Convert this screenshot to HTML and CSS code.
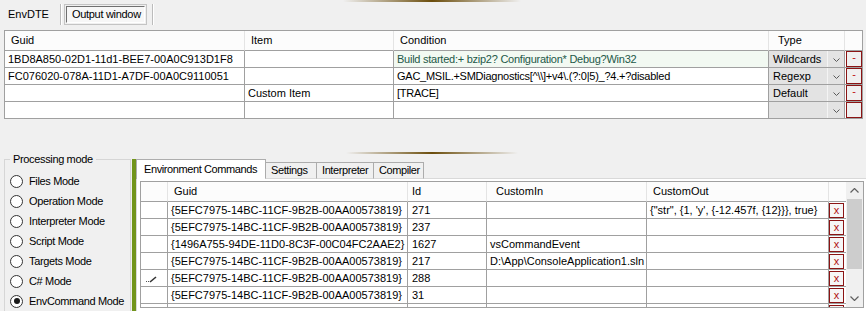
FILE: index.html
```html
<!DOCTYPE html>
<html lang="en">
<head>
    <meta charset="UTF-8">
    <title>EnvDTE Output window</title>
    <link rel="stylesheet" href="styles.css">
</head>
<body>
    <div class="ornament ornament-top"></div>
    <div class="toolbar">
        <span class="tb-label">EnvDTE</span>
        <span class="tb-sep"></span>
        <span class="tb-button"><span>Output window</span></span>
        <span class="tb-sep"></span>
    </div>

    <div class="grid filters">
        <div class="f-row head">
            <div class="cell">Guid</div>
            <div class="cell">Item</div>
            <div class="cell">Condition</div>
            <div class="cell">Type</div>
            <div class="cell"></div>
        </div>
        <div class="f-row">
            <div class="cell">1BD8A850-02D1-11d1-BEE7-00A0C913D1F8</div>
            <div class="cell"></div>
            <div class="cell cond active">Build started:+ bzip2? Configuration* Debug?Win32</div>
            <div class="cell combo"><span class="combo-text">Wildcards</span><span class="combo-arrow"><svg width="7" height="4"><polyline points="0.5,0.5 3.5,3.5 6.5,0.5" fill="none" stroke="#5a5a5a"/></svg></span></div>
            <div class="cell"><span class="minus">-</span></div>
        </div>
        <div class="f-row">
            <div class="cell">FC076020-078A-11D1-A7DF-00A0C9110051</div>
            <div class="cell"></div>
            <div class="cell cond">GAC_MSIL.+SMDiagnostics[^\\]+v4\.(?:0|5)_?4.+?disabled</div>
            <div class="cell combo"><span class="combo-text">Regexp</span><span class="combo-arrow"><svg width="7" height="4"><polyline points="0.5,0.5 3.5,3.5 6.5,0.5" fill="none" stroke="#5a5a5a"/></svg></span></div>
            <div class="cell"><span class="minus">-</span></div>
        </div>
        <div class="f-row">
            <div class="cell"></div>
            <div class="cell">Custom Item</div>
            <div class="cell cond">[TRACE]</div>
            <div class="cell combo"><span class="combo-text">Default</span><span class="combo-arrow"><svg width="7" height="4"><polyline points="0.5,0.5 3.5,3.5 6.5,0.5" fill="none" stroke="#5a5a5a"/></svg></span></div>
            <div class="cell"><span class="minus">-</span></div>
        </div>
        <div class="f-row last">
            <div class="cell"></div>
            <div class="cell"></div>
            <div class="cell"></div>
            <div class="cell combo"><span class="combo-text"></span><span class="combo-arrow"><svg width="7" height="4"><polyline points="0.5,0.5 3.5,3.5 6.5,0.5" fill="none" stroke="#5a5a5a"/></svg></span></div>
            <div class="cell"><span class="minus"></span></div>
        </div>
    </div>

    <div class="ornament ornament-mid"></div>

    <div class="bottom">
        <div class="group">
            <div class="group-title">Processing mode</div>
            <div class="modes">
                <div class="mode"><span class="radio"></span>Files Mode</div>
                <div class="mode"><span class="radio"></span>Operation Mode</div>
                <div class="mode"><span class="radio"></span>Interpreter Mode</div>
                <div class="mode"><span class="radio"></span>Script Mode</div>
                <div class="mode"><span class="radio"></span>Targets Mode</div>
                <div class="mode"><span class="radio"></span>C# Mode</div>
                <div class="mode"><span class="radio on"><span class="dot"></span></span>EnvCommand Mode</div>
            </div>
        </div>
        <div class="accent"></div>
        <div class="tabs">
            <div class="tab-strip">
                <div class="tab selected w-env">Environment Commands</div>
                <div class="tab w-set">Settings</div>
                <div class="tab w-int">Interpreter</div>
                <div class="tab w-cmp">Compiler</div>
                <div class="tab-fill"></div>
            </div>
            <div class="page">
                <div class="grid commands">
                    <div class="cmd-rows">
                        <div class="c-row head">
                            <div class="cell"></div>
                            <div class="cell">Guid</div>
                            <div class="cell">Id</div>
                            <div class="cell">CustomIn</div>
                            <div class="cell">CustomOut</div>
                            <div class="cell"></div>
                        </div>
                        <div class="c-row">
                            <div class="cell"></div>
                            <div class="cell">{5EFC7975-14BC-11CF-9B2B-00AA00573819}</div>
                            <div class="cell">271</div>
                            <div class="cell"></div>
                            <div class="cell">{"str", {1, 'y', {-12.457f, {12}}}, true}</div>
                            <div class="cell"><span class="xbtn">x</span></div>
                        </div>
                        <div class="c-row">
                            <div class="cell"></div>
                            <div class="cell">{5EFC7975-14BC-11CF-9B2B-00AA00573819}</div>
                            <div class="cell">237</div>
                            <div class="cell"></div>
                            <div class="cell"></div>
                            <div class="cell"><span class="xbtn">x</span></div>
                        </div>
                        <div class="c-row">
                            <div class="cell"></div>
                            <div class="cell">{1496A755-94DE-11D0-8C3F-00C04FC2AAE2}</div>
                            <div class="cell">1627</div>
                            <div class="cell">vsCommandEvent</div>
                            <div class="cell"></div>
                            <div class="cell"><span class="xbtn">x</span></div>
                        </div>
                        <div class="c-row">
                            <div class="cell"></div>
                            <div class="cell">{5EFC7975-14BC-11CF-9B2B-00AA00573819}</div>
                            <div class="cell">217</div>
                            <div class="cell">D:\App\ConsoleApplication1.sln</div>
                            <div class="cell"></div>
                            <div class="cell"><span class="xbtn">x</span></div>
                        </div>
                        <div class="c-row">
                            <div class="cell pen"><svg width="12" height="7"><rect x="0" y="5" width="1" height="1" fill="#555"/><rect x="2" y="5" width="1" height="1" fill="#555"/><line x1="4" y1="6" x2="10" y2="1" stroke="#333" stroke-width="1.6"/></svg></div>
                            <div class="cell">{5EFC7975-14BC-11CF-9B2B-00AA00573819}</div>
                            <div class="cell">288</div>
                            <div class="cell"></div>
                            <div class="cell"></div>
                            <div class="cell"><span class="xbtn">x</span></div>
                        </div>
                        <div class="c-row">
                            <div class="cell"></div>
                            <div class="cell">{5EFC7975-14BC-11CF-9B2B-00AA00573819}</div>
                            <div class="cell">31</div>
                            <div class="cell"></div>
                            <div class="cell"></div>
                            <div class="cell"><span class="xbtn">x</span></div>
                        </div>
                        <div class="c-row">
                            <div class="cell"></div>
                            <div class="cell">{</div>
                            <div class="cell"></div>
                            <div class="cell"></div>
                            <div class="cell"></div>
                            <div class="cell"><span class="xbtn"></span></div>
                        </div>
                    </div>
                    <div class="vscroll">
                        <div class="sb-btn"><svg width="9" height="5"><polyline points="0.5,4.5 4.5,0.5 8.5,4.5" fill="none" stroke="#606060" stroke-width="1.2"/></svg></div>
                        <div class="sb-thumb"></div>
                        <div class="sb-track"></div>
                        <div class="sb-btn"><svg width="9" height="5"><polyline points="0.5,0.5 4.5,4.5 8.5,0.5" fill="none" stroke="#606060" stroke-width="1.2"/></svg></div>
                    </div>
                </div>
            </div>
        </div>
    </div>
</body>
</html>
```

FILE: styles.css
```css
body { margin: 0; width: 866px; height: 311px; overflow: hidden; background: #f0f0f0; font-family: "Liberation Sans", Arial, sans-serif; font-size: 11px; color: #000; }

.ornament { height: 2px; background: linear-gradient(to right, rgba(110, 80, 10, 0), #6b4d0c 50%, rgba(110, 80, 10, 0)); }
.ornament-top { width: 178px; margin-left: 343px; }
.ornament-mid { width: 172px; margin: 33px 0 0 346px; }

/* top toolbar */
.toolbar { display: flex; height: 28px; box-sizing: border-box; padding: 2px 0 0 8px; }
.tb-label { line-height: 21px; }
.tb-sep { width: 0; height: 21px; border-left: 1px solid #bcbcbc; border-right: 1px solid #fff; margin-left: 11px; }
.tb-button { width: 83px; height: 21px; box-sizing: border-box; border: 1px solid #c4c4c4; padding: 1px; margin-left: 2px; }
.tb-button span { display: block; height: 100%; box-sizing: border-box; border-top: 1px solid #707070; border-left: 1px solid #707070; border-bottom: 1px solid #fff; border-right: 1px solid #fff; background: #f7f7f7; line-height: 15px; padding-left: 5px; letter-spacing: -0.3px; }
.tb-button + .tb-sep { margin-left: 5px; }

/* shared grid look */
.grid { background: #fff; border: 1px solid #a0a0a0; box-sizing: border-box; }
.cell { box-sizing: border-box; border-right: 1px solid #a0a0a0; border-bottom: 1px solid #a0a0a0; height: 17px; line-height: 16px; padding-left: 3px; white-space: nowrap; overflow: hidden; }
.head .cell { height: 20px; line-height: 19px; padding-left: 6px; background: #fcfcfc; border-right-color: #e4e4e4; border-bottom-color: #a0a0a0; }

/* filter grid */
.filters { width: 859px; margin-left: 4px; }
.f-row { display: grid; grid-template-columns: 240px 149px 375px 76px 17px; }
.f-row .cell:last-child { border-right: none; }
.f-row.last .cell { border-bottom: none; height: 16px; }
.cond { letter-spacing: -0.25px; }
.cond.active { background: #f2f9f2; color: #235848; }
.head .cell:nth-child(4) { padding-left: 9px; }
.combo { display: flex; padding: 0; background: #e3e3e3; }
.combo-text { flex: 1; padding-left: 4px; border-right: 1px solid #f4f4f4; }
.combo-arrow { width: 16px; display: flex; align-items: center; justify-content: center; padding-top: 2px; box-sizing: border-box; }
.f-row .cell:last-child { padding: 0 0 0 1px; }
.minus { display: block; width: 16px; height: 100%; box-sizing: border-box; border: 1px solid #8b1414; background: #f0f0f0; color: #c01010; text-align: center; line-height: 11px; }

/* bottom area */
.bottom { display: flex; margin-top: 1px; height: 156px; }
.group { margin: 4px 0 0 4px; width: 127px; height: 152px; box-sizing: border-box; border: 1px solid #d6d6d6; border-bottom: none; }
.group-title { display: table; margin: -7px 0 0 5px; padding: 0 3px; background: #f0f0f0; line-height: 13px; letter-spacing: -0.35px; }
.modes { margin-top: 5px; }
.mode { display: flex; align-items: center; height: 20px; padding-left: 5px; letter-spacing: -0.35px; }
.radio { width: 13px; height: 13px; box-sizing: border-box; border: 1px solid #333; border-radius: 50%; background: #fff; margin-right: 6px; display: flex; align-items: center; justify-content: center; }
.dot { width: 6px; height: 6px; border-radius: 50%; background: #1a1a1a; }
.accent { width: 4px; margin: 4px 0 0 1px; background: #72951c; }

.tabs { flex: 1; display: flex; flex-direction: column; margin-top: 4px; }
.tab-strip { display: flex; align-items: flex-end; height: 20px; }
.tab { height: 17px; box-sizing: border-box; border: 1px solid #acacac; border-bottom-color: #d9d9d9; margin-left: -1px; background: #f0f0f0; line-height: 15px; padding-left: 5px; letter-spacing: -0.4px; white-space: nowrap; overflow: hidden; }
.tab.selected { height: 20px; margin-left: 0; background: #fff; border-color: #adadad; border-bottom: none; line-height: 19px; padding-left: 7px; }
.w-env { width: 130px; }
.w-set { width: 52px; }
.w-int { width: 58px; }
.w-cmp { width: 51px; }
.tab-fill { flex: 1; border-bottom: 1px solid #d9d9d9; }
.page { flex: 1; background: #fff; border-left: 1px solid #d9d9d9; padding: 2px 0 0 3px; }

/* commands grid */
.commands { width: 724px; height: 127px; display: flex; overflow: hidden; }
.cmd-rows { width: 705px; }
.c-row { display: grid; grid-template-columns: 27px 240px 79px 160px 182px 17px; }
.c-row .cell:nth-child(1) { padding: 0; }
.c-row .cell:nth-child(3) { padding-left: 4px; }
.c-row .cell:last-child { border-right: none; padding: 1px 0 0 0; }
.head .cell:last-child { border-bottom-color: #a0a0a0; }
.pen { display: flex; align-items: flex-end; padding: 0 0 3px 5px !important; }
.xbtn { display: block; width: 15px; height: 15px; box-sizing: border-box; border: 1px solid #8b1414; background: #f6f6f6; color: #b01010; text-align: center; line-height: 12px; }

.vscroll { width: 17px; background: #f0f0f0; display: flex; flex-direction: column; }
.sb-btn { height: 17px; display: flex; align-items: center; justify-content: center; }
.sb-thumb { height: 70px; margin: 0 1px; background: #cdcdcd; }
.sb-track { flex: 1; }
```
